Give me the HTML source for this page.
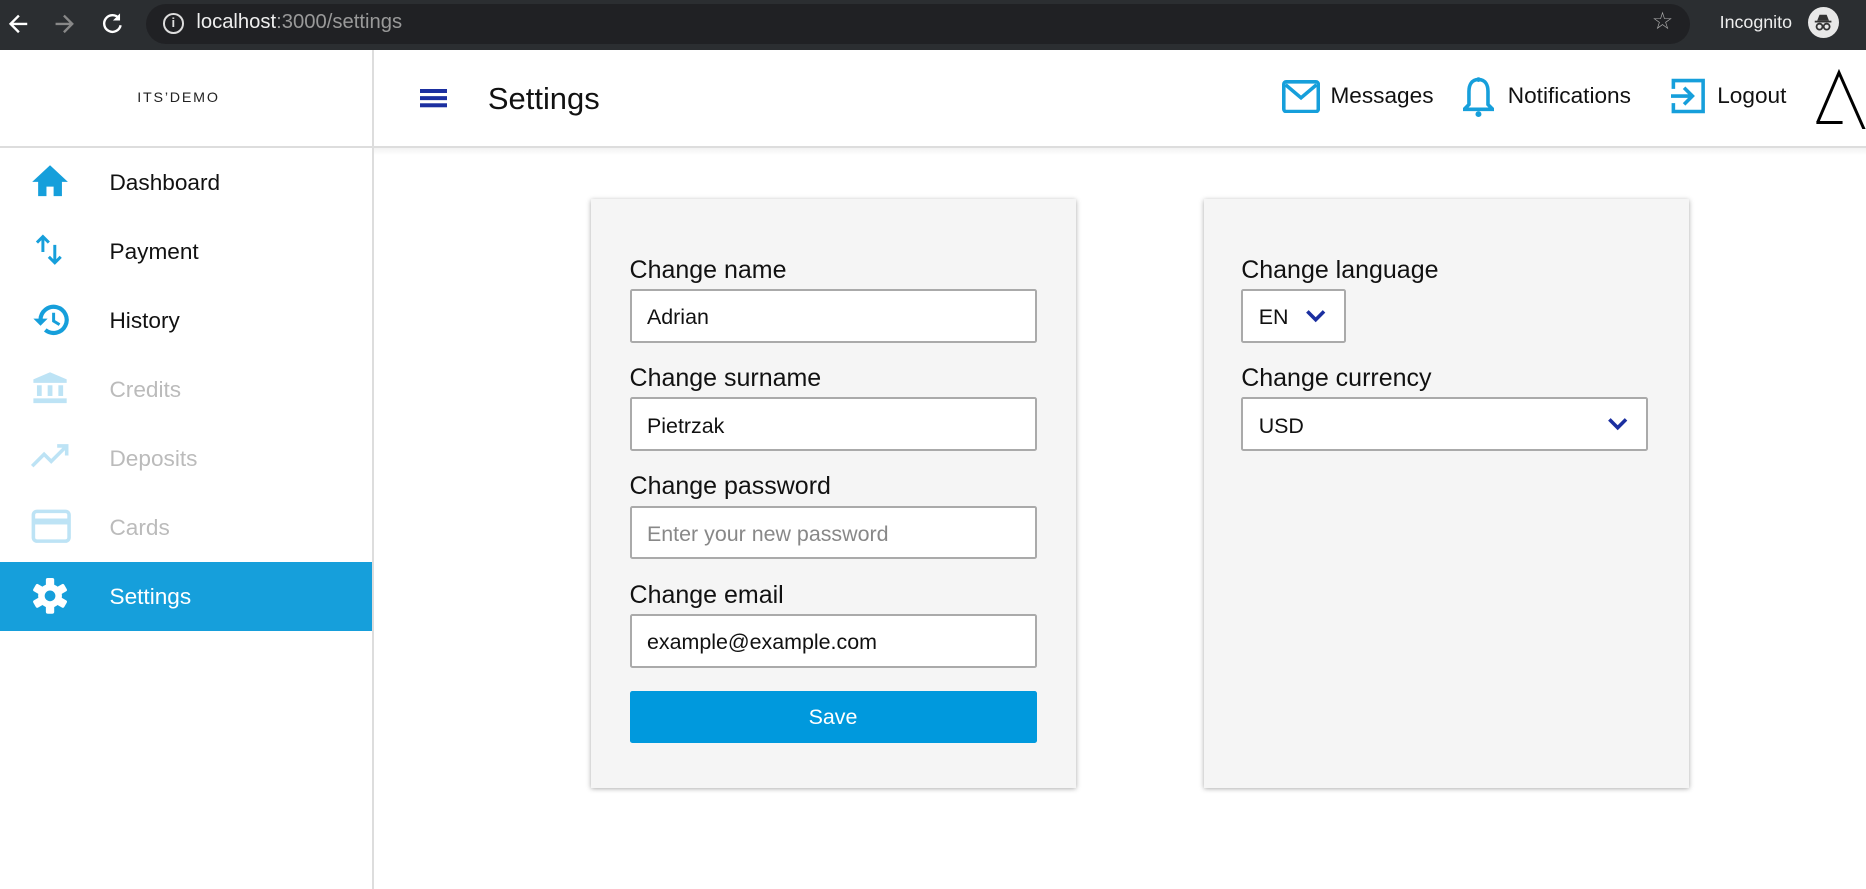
<!DOCTYPE html>
<html><head><meta charset="utf-8">
<style>
html,body{margin:0;padding:0;background:#fff;overflow:hidden}
body{width:1866px;height:889px}
#w{zoom:1.19005;width:1568px;height:747px;position:relative;font-family:"Liberation Sans",sans-serif;color:#111}
.a{position:absolute}
.nav{position:absolute;left:0;width:313px;height:58px}
.nav svg{position:absolute;left:26px;top:14px}
.nav span{position:absolute;left:92px;top:19px;font-size:19px}
.lbl{position:absolute;font-size:21px;color:#111}
.inp{position:absolute;background:#fff;border:2px solid #aaa;border-radius:2px;box-sizing:border-box;height:45px;font-size:18px;padding:12px 0 0 13px}
</style></head><body><div id="w">
<div class="a" style="left:0;top:0;width:1568px;height:42px;background:#2b2e31"></div>
<svg class="a" style="left:6px;top:10px" width="20" height="20" viewBox="0 0 20 20"><path d="M17 10H4M10 3L3 10l7 7" stroke="#fff" stroke-width="2" fill="none"/></svg>
<svg class="a" style="left:44px;top:10px" width="20" height="20" viewBox="0 0 20 20"><path d="M3 10h13M10 3l7 7-7 7" stroke="#888" stroke-width="2" fill="none"/></svg>
<svg class="a" style="left:85px;top:9px" width="20" height="20" viewBox="0 0 20 20"><path d="M15 6A7 7 0 1 0 16.5 12" stroke="#fff" stroke-width="2" fill="none"/><path d="M16 2v6h-6z" fill="#fff"/></svg>
<div class="a" style="left:123px;top:3px;width:1297px;height:34px;background:#202124;border-radius:17px"></div>
<div class="a" style="left:137px;top:11px;width:14px;height:14px;border:2px solid #ddd;border-radius:50%;color:#ddd;font-size:11px;text-align:center;line-height:14px;font-weight:bold">i</div>
<div class="a" style="left:165px;top:9px;font-size:17px;color:#eee">localhost<span style="color:#999">:3000/settings</span></div>
<div class="a" style="left:1388px;top:6px;font-size:20px;color:#aaa">☆</div>
<div class="a" style="left:1445px;top:10px;font-size:15px;color:#eee">Incognito</div>
<div class="a" style="left:1519px;top:6px;width:26px;height:26px;border-radius:50%;background:#e8e8e8"></div>
<svg class="a" style="left:1521px;top:8px" width="22" height="22" viewBox="0 0 22 22"><path d="M6 9h10l-2-5H8z" fill="#333"/><rect x="4" y="9" width="14" height="1.5" fill="#333"/><circle cx="8" cy="14" r="2.5" stroke="#333" stroke-width="1.5" fill="none"/><circle cx="14" cy="14" r="2.5" stroke="#333" stroke-width="1.5" fill="none"/></svg>
<div class="a" style="left:313px;top:42px;width:1px;height:705px;background:#ddd"></div>
<div class="a" style="left:0;top:123px;width:1568px;height:1px;background:#ddd"></div>
<div class="a" style="left:314px;top:124px;width:1254px;height:6px;background:linear-gradient(#f2f2f2,#fff)"></div>
<div class="a" style="left:0;top:76px;width:300px;text-align:center;font-size:12px;letter-spacing:1.5px;color:#222">ITS’DEMO</div>
<div class="a" style="left:353px;top:75px;width:23px;height:3px;background:#1b2fa0;box-shadow:0 6px 0 #1b2fa0,0 12px 0 #1b2fa0"></div>
<div class="a" style="left:410px;top:68px;font-size:26px">Settings</div>
<svg class="a" style="left:1077px;top:67px" width="32" height="28" viewBox="0 0 32 28"><rect x="1.5" y="1.5" width="29" height="25" rx="2" stroke="#169fdb" stroke-width="3" fill="none"/><path d="M3 4l13 11 13-11" stroke="#169fdb" stroke-width="3" fill="none"/></svg>
<div class="a" style="left:1118px;top:70px;font-size:19px">Messages</div>
<svg class="a" style="left:1229px;top:64px" width="26" height="36" viewBox="0 0 26 36"><path d="M13 3c-6 0-8 5-8 10v11l-4 4h24l-4-4V13c0-5-2-10-8-10z" stroke="#169fdb" stroke-width="3" fill="none"/><circle cx="13" cy="32" r="2.5" fill="#169fdb"/><circle cx="13" cy="3" r="2" fill="#169fdb"/></svg>
<div class="a" style="left:1267px;top:70px;font-size:19px">Notifications</div>
<svg class="a" style="left:1404px;top:65px" width="30" height="32" viewBox="0 0 30 32"><path d="M2 10V3h25v26H2v-7" stroke="#169fdb" stroke-width="3" fill="none"/><path d="M0 16h17M11 9l7 7-7 7" stroke="#169fdb" stroke-width="3" fill="none"/></svg>
<div class="a" style="left:1443px;top:70px;font-size:19px">Logout</div>
<svg class="a" style="left:1524px;top:58px" width="44" height="50" viewBox="0 0 44 50"><path d="M3 45L21 3l23 52M2 45h22" stroke="#000" stroke-width="2.5" fill="none"/></svg>
<div class="nav" style="top:124px"><svg width="32" height="30" viewBox="0 0 32 30"><path d="M16 1L1 15h5v12h7v-8h6v8h7V15h5z" fill="#169fdb"/></svg><span>Dashboard</span></div>
<div class="nav" style="top:182px"><svg width="32" height="30" viewBox="0 0 32 30"><path d="M10 16V3M5 8l5-5 5 5" stroke="#169fdb" stroke-width="2.5" fill="none"/><path d="M20 10v15M15 20l5 5 5-5" stroke="#169fdb" stroke-width="2.5" fill="none"/></svg><span>Payment</span></div>
<div class="nav" style="top:240px"><svg width="34" height="30" viewBox="0 0 34 30"><path d="M8 15a11 11 0 1 1 4 8.5" stroke="#169fdb" stroke-width="3.5" fill="none"/><path d="M2 14h12l-6 6z" fill="#169fdb"/><path d="M19 9v7l5 3" stroke="#169fdb" stroke-width="2.5" fill="none"/></svg><span>History</span></div>
<div class="nav" style="top:298px"><svg width="32" height="30" viewBox="0 0 32 30"><path d="M16 1L2 7v3h28V7z" fill="#bde3f5"/><rect x="5" y="12" width="4" height="9" fill="#bde3f5"/><rect x="14" y="12" width="4" height="9" fill="#bde3f5"/><rect x="23" y="12" width="4" height="9" fill="#bde3f5"/><rect x="2" y="23" width="28" height="4" fill="#bde3f5"/></svg><span style="color:#bbb">Credits</span></div>
<div class="nav" style="top:356px"><svg width="34" height="30" viewBox="0 0 34 30"><path d="M1 22l10-10 6 6 12-12M22 5h8v8" stroke="#bde3f5" stroke-width="3" fill="none"/></svg><span style="color:#bbb">Deposits</span></div>
<div class="nav" style="top:414px"><svg width="34" height="30" viewBox="0 0 34 30"><rect x="2" y="2" width="30" height="25" rx="3" stroke="#bde3f5" stroke-width="3" fill="none"/><rect x="2" y="8" width="30" height="5" fill="#bde3f5"/></svg><span style="color:#bbb">Cards</span></div>
<div class="nav" style="top:472px;background:#169fdb"><svg width="32" height="32" viewBox="0 0 32 32"><g fill="#fff" transform="translate(16 15)"><circle r="10"/><rect x="-3.5" y="-15" width="7" height="30" rx="1.5"/><rect x="-3.5" y="-15" width="7" height="30" rx="1.5" transform="rotate(60)"/><rect x="-3.5" y="-15" width="7" height="30" rx="1.5" transform="rotate(120)"/></g><circle cx="16" cy="15" r="4.5" fill="#169fdb"/></svg><span style="color:#fff">Settings</span></div>
<div class="a" style="left:497px;top:167px;width:407px;height:495px;background:#f5f5f5;box-shadow:0 1px 4px rgba(0,0,0,.35)"></div>
<div class="lbl" style="left:529px;top:215px">Change name</div>
<div class="inp" style="left:529px;top:243px;width:342px">Adrian</div>
<div class="lbl" style="left:529px;top:306px">Change surname</div>
<div class="inp" style="left:529px;top:334px;width:342px">Pietrzak</div>
<div class="lbl" style="left:529px;top:397px">Change password</div>
<div class="inp" style="left:529px;top:425px;width:342px;color:#888">Enter your new password</div>
<div class="lbl" style="left:529px;top:488px">Change email</div>
<div class="inp" style="left:529px;top:516px;width:342px">example@example.com</div>
<div class="a" style="left:529px;top:581px;width:342px;height:43px;background:#0099dd;border-radius:2px;color:#fff;font-size:18px;text-align:center;line-height:45px">Save</div>
<div class="a" style="left:1012px;top:167px;width:407px;height:495px;background:#f5f5f5;box-shadow:0 1px 4px rgba(0,0,0,.35)"></div>
<div class="lbl" style="left:1043px;top:215px">Change language</div>
<div class="inp" style="left:1043px;top:243px;width:88px">EN</div>
<svg class="a" style="left:1097px;top:260px" width="18" height="12" viewBox="0 0 18 12"><path d="M2 2l7 7 7-7" stroke="#1b2fa0" stroke-width="3" fill="none"/></svg>
<div class="lbl" style="left:1043px;top:306px">Change currency</div>
<div class="inp" style="left:1043px;top:334px;width:342px">USD</div>
<svg class="a" style="left:1350px;top:350px" width="18" height="12" viewBox="0 0 18 12"><path d="M2 2l7 7 7-7" stroke="#1b2fa0" stroke-width="3" fill="none"/></svg>
</div></body></html>
